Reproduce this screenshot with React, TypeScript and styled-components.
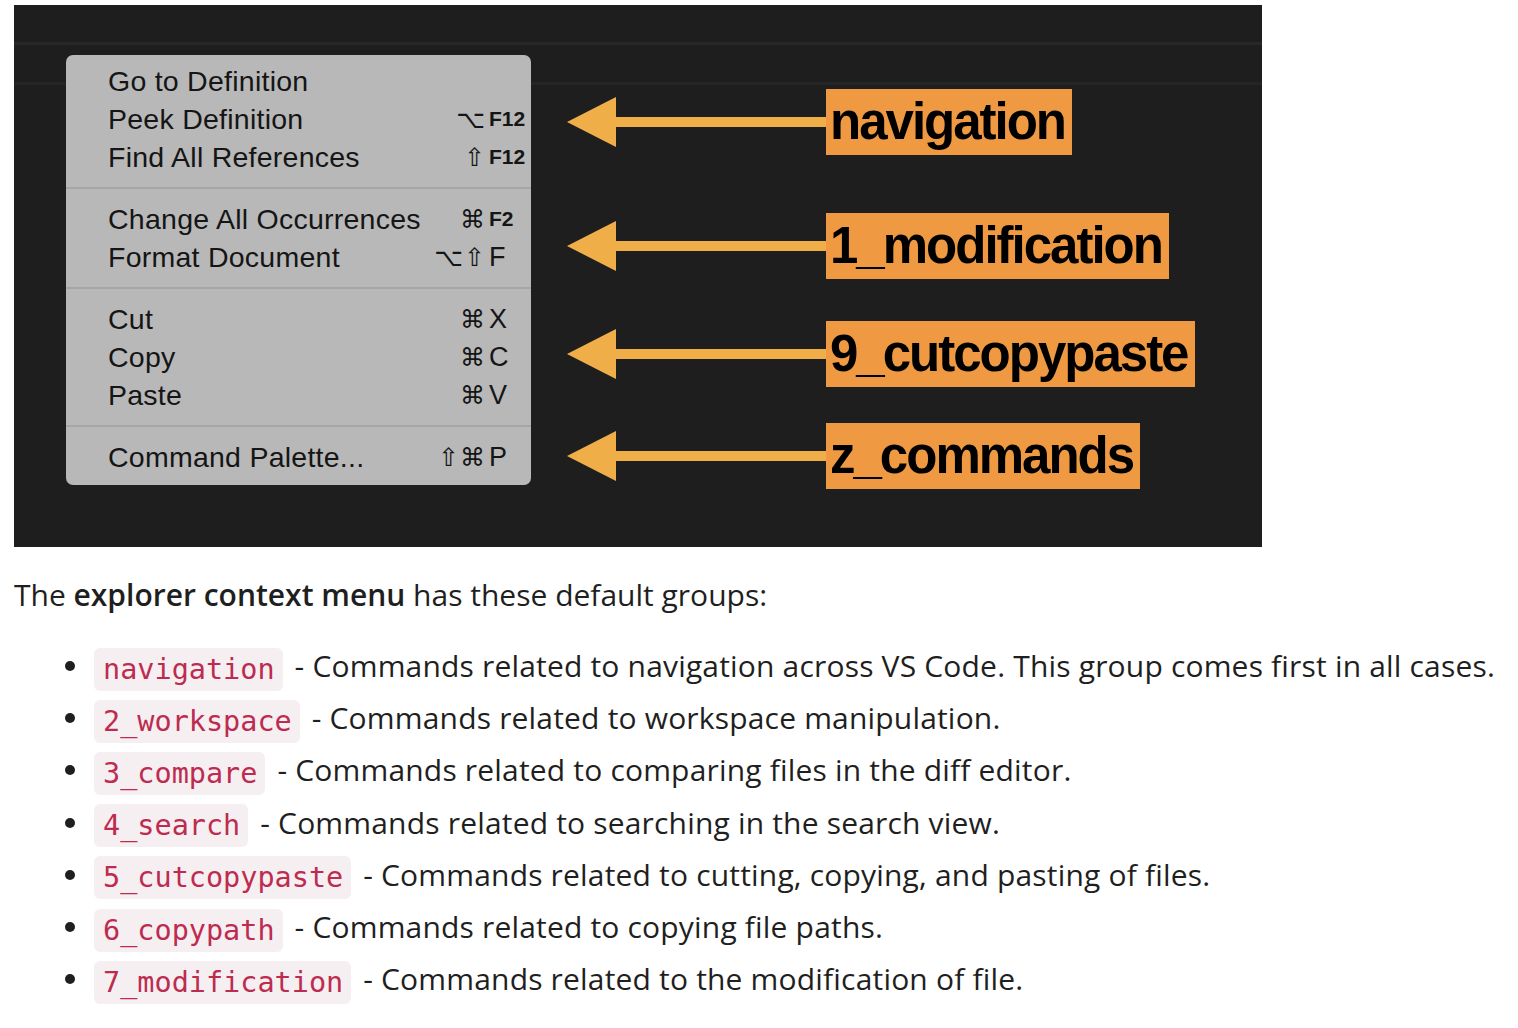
import React from "react";
import styled, { createGlobalStyle } from "styled-components";

const GlobalStyle = createGlobalStyle`
  html, body { margin: 0; padding: 0; background: #ffffff; }
  body { font-family: "Open Sans", "Noto Sans", sans-serif; color: #1f1f1f; }
`;

const Page = styled.div`
  padding: 5px 0 0 14px;
`;

const Panel = styled.div`
  width: 1248px;
  height: 542px;
  box-sizing: border-box;
  display: flex;
  gap: 36px;
  padding: 50px 0 0 52px;
  background: linear-gradient(
    to bottom,
    #1e1e1e 0px,
    #1e1e1e 37px,
    #272727 37px,
    #272727 40px,
    #1e1e1e 40px,
    #1e1e1e 77px,
    #252525 77px,
    #252525 80px,
    #1e1e1e 80px
  );
`;

const Menu = styled.div`
  width: 465px;
  align-self: flex-start;
  box-sizing: border-box;
  background: #b8b8b8;
  border-radius: 7px;
  padding: 7px 0 9px;
  font-family: "Liberation Sans", Arial, sans-serif;
  color: #151515;
`;

const Row = styled.div`
  display: grid;
  grid-template-columns: 1fr auto 42px;
  align-items: center;
  height: 38px;
  padding-left: 42px;
  font-size: 28.5px;
  letter-spacing: 0.25px;
`;

const Label = styled.span`
  white-space: nowrap;
`;

const Mods = styled.span`
  text-align: right;
  padding-right: 3px;
  font-family: "DejaVu Sans", sans-serif;
  font-size: 25px;
  letter-spacing: 1px;
`;

const Key = styled.span<{ $small?: boolean }>`
  font-size: ${(p) => (p.$small ? "21px" : "27px")};
  font-weight: ${(p) => (p.$small ? 700 : 400)};
  letter-spacing: 0;
`;

const Separator = styled.div`
  height: 24px;
  display: flex;
  align-items: center;
  &::after {
    content: "";
    display: block;
    width: 100%;
    height: 2px;
    background: #a6a6a6;
  }
`;

const Callouts = styled.div`
  display: flex;
  flex-direction: column;
  padding-top: 34px;
`;

const Callout = styled.div<{ $gap: number }>`
  display: flex;
  align-items: center;
  height: 66px;
  margin-top: ${(p) => p.$gap}px;
`;

const Tag = styled.div`
  height: 66px;
  box-sizing: border-box;
  padding: 0 7px 0 4px;
  background: #ef9a42;
  color: #000;
  font-family: "Liberation Sans", Arial, sans-serif;
  font-weight: 700;
  font-size: 51px;
  letter-spacing: -2px;
  line-height: 66px;
  white-space: nowrap;
`;

const Arrow = () => (
  <svg width="259" height="50" viewBox="0 0 259 50">
    <polygon points="0,25 49,0 49,50" fill="#f0ae48" />
    <rect x="48" y="20" width="211" height="10" fill="#f0ae48" />
  </svg>
);

const Intro = styled.p`
  margin: 27px 0 0;
  font-size: 30px;
  line-height: 42px;
`;

const Strong = styled.strong`
  font-weight: 600;
`;

const List = styled.ul`
  margin: 24px 0 0;
  padding: 0;
  list-style: none;
`;

const Item = styled.li`
  display: flex;
  align-items: center;
  height: 52.2px;
  padding-left: 51px;
  font-size: 30px;
  letter-spacing: 0.18px;
`;

const Bullet = styled.span`
  width: 10px;
  height: 10px;
  border-radius: 50%;
  background: #1f1f1f;
  margin-right: 19px;
  flex: none;
`;

const ItemText = styled.span`
  white-space: nowrap;
  line-height: 52px;
`;

const Code = styled.code`
  display: inline-block;
  height: 43px;
  line-height: 43px;
  vertical-align: middle;
  padding: 0 8px 0 9px;
  margin-right: 4px;
  border-radius: 6px;
  background: #f6eff1;
  color: #bd2c50;
  font-family: "DejaVu Sans Mono", "Liberation Mono", monospace;
  font-size: 28.5px;
  letter-spacing: 0;
`;

type MenuRow = { label: string; mods?: string; key?: string; small?: boolean };

const groups: MenuRow[][] = [
  [
    { label: "Go to Definition" },
    { label: "Peek Definition", mods: "⌥", key: "F12", small: true },
    { label: "Find All References", mods: "⇧", key: "F12", small: true },
  ],
  [
    { label: "Change All Occurrences", mods: "⌘", key: "F2", small: true },
    { label: "Format Document", mods: "⌥⇧", key: "F" },
  ],
  [
    { label: "Cut", mods: "⌘", key: "X" },
    { label: "Copy", mods: "⌘", key: "C" },
    { label: "Paste", mods: "⌘", key: "V" },
  ],
  [{ label: "Command Palette...", mods: "⇧⌘", key: "P" }],
];

const callouts = [
  { text: "navigation", gap: 0 },
  { text: "1_modification", gap: 58 },
  { text: "9_cutcopypaste", gap: 42 },
  { text: "z_commands", gap: 36 },
];

const items = [
  { code: "navigation", text: "Commands related to navigation across VS Code. This group comes first in all cases." },
  { code: "2_workspace", text: "Commands related to workspace manipulation." },
  { code: "3_compare", text: "Commands related to comparing files in the diff editor." },
  { code: "4_search", text: "Commands related to searching in the search view." },
  { code: "5_cutcopypaste", text: "Commands related to cutting, copying, and pasting of files." },
  { code: "6_copypath", text: "Commands related to copying file paths." },
  { code: "7_modification", text: "Commands related to the modification of file." },
];

export default function App() {
  return (
    <>
      <GlobalStyle />
      <Page>
        <Panel>
          <Menu>
            {groups.map((g, gi) => (
              <React.Fragment key={gi}>
                {gi > 0 && <Separator />}
                {g.map((r) => (
                  <Row key={r.label}>
                    <Label>{r.label}</Label>
                    <Mods>{r.mods ?? ""}</Mods>
                    <Key $small={r.small}>{r.key ?? ""}</Key>
                  </Row>
                ))}
              </React.Fragment>
            ))}
          </Menu>
          <Callouts>
            {callouts.map((c) => (
              <Callout key={c.text} $gap={c.gap}>
                <Arrow />
                <Tag>{c.text}</Tag>
              </Callout>
            ))}
          </Callouts>
        </Panel>
        <Intro>
          The <Strong>explorer context menu</Strong> has these default groups:
        </Intro>
        <List>
          {items.map((it) => (
            <Item key={it.code}>
              <Bullet />
              <ItemText>
                <Code>{it.code}</Code> - {it.text}
              </ItemText>
            </Item>
          ))}
        </List>
      </Page>
    </>
  );
}
